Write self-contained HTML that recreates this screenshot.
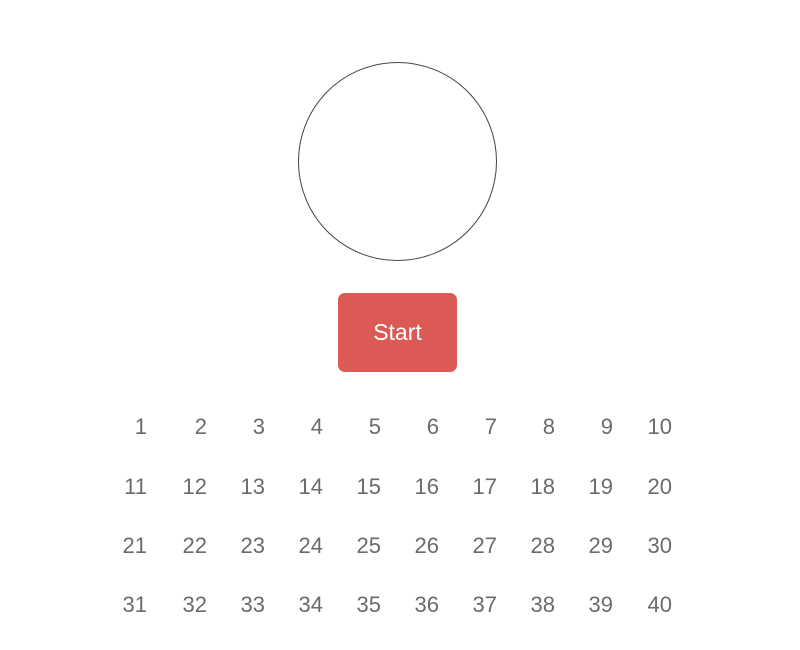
<!DOCTYPE html>
<html><head><style>
body{margin:0;width:800px;height:650px;background:#fff;position:relative;font-family:"Liberation Sans",sans-serif;overflow:hidden}
.c{position:absolute;left:298px;top:62px;width:197px;height:197px;border:1px solid #444;border-radius:50%}
.b{position:absolute;left:338px;top:293px;width:119px;height:79px;background:#db5a55;border-radius:7px;color:#fff;font-size:23px;line-height:79px;text-align:center}
.n{position:absolute;width:50px;text-align:right;font-size:22px;color:#6b6b6b;line-height:26px}
</style></head><body>
<div class="c"></div>
<div class="b">Start</div>
<div id="g"></div>
<script>
var r=[147,207,265,323,381,439,497,555,613,672],t=[414,474,533,592],h='';
for(var i=0;i<4;i++)for(var j=0;j<10;j++)h+='<div class="n" style="left:'+(r[j]-50)+'px;top:'+t[i]+'px">'+(i*10+j+1)+'</div>';
document.getElementById('g').innerHTML=h;
</script>
</body></html>
